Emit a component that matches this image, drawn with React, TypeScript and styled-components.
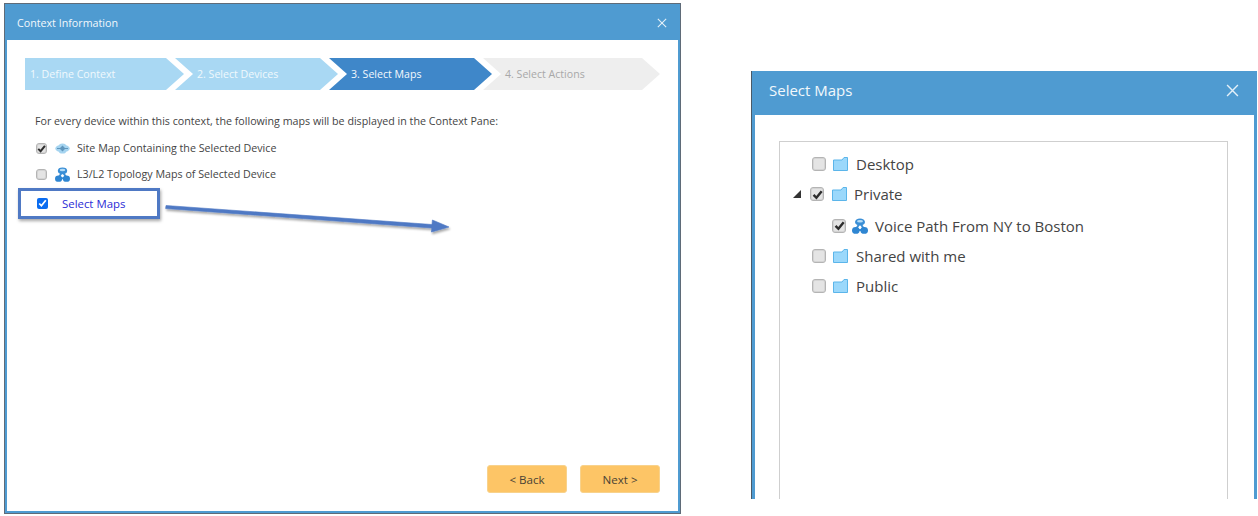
import React from 'react';
import styled, { createGlobalStyle } from 'styled-components';

const GlobalStyle = createGlobalStyle`
  html, body {
    margin: 0;
    padding: 0;
    background: #fff;
    font-family: "Open Sans", "Liberation Sans", sans-serif;
  }
`;

const Page = styled.div`
  position: relative;
  width: 1258px;
  height: 516px;
  overflow: hidden;
  display: flex;
  align-items: flex-start;
  padding: 4px 0 0 5px;
  box-sizing: border-box;
`;

const Dialog = styled.div`
  width: 675px;
  height: 509px;
  flex: none;
  box-sizing: border-box;
  background: #fff;
  border: 2px solid #4f9bd1;
  border-top-width: 1px;
  box-shadow: 0 0 0 1px #5f6b78;
  display: flex;
  flex-direction: column;
`;

const Header = styled.div`
  height: 35px;
  flex: none;
  margin: 0 -2px;
  padding: 0 13px 0 12px;
  background: #4f9bd1;
  color: #f2f8fc;
  font-size: 10.7px;
  display: flex;
  align-items: center;
  justify-content: space-between;
`;

const Steps = styled.div`
  display: flex;
  margin: 18px 0 0 18px;
`;

const Step = styled.div<{ $bg: string; $fg: string; $first?: boolean; $w: number }>`
  width: ${(p) => p.$w}px;
  height: 32px;
  flex: none;
  box-sizing: border-box;
  margin-left: ${(p) => (p.$first ? 0 : -9)}px;
  padding-left: ${(p) => (p.$first ? 5 : 22)}px;
  background: ${(p) => p.$bg};
  color: ${(p) => p.$fg};
  font-size: 10.6px;
  line-height: 32px;
  clip-path: ${(p) =>
    p.$first
      ? 'polygon(0 0, calc(100% - 18px) 0, 100% 50%, calc(100% - 18px) 100%, 0 100%)'
      : 'polygon(0 0, calc(100% - 18px) 0, 100% 50%, calc(100% - 18px) 100%, 0 100%, 18px 50%)'};
`;

const Content = styled.div`
  flex: 1;
  display: flex;
  flex-direction: column;
  padding: 23px 0 0 11px;
  color: #444;
  font-size: 10.7px;
`;

const Intro = styled.div`
  line-height: 16px;
  margin-left: 17px;
`;

const OptionRow = styled.div`
  display: flex;
  align-items: center;
  height: 26px;
  margin-left: 18px;
`;

const FirstOption = styled(OptionRow)`
  margin-top: 6px;
`;

const OptionIcon = styled.span`
  display: flex;
  margin: 0 7px 0 8px;
  width: 15px;
  justify-content: center;
`;

const Highlight = styled.div`
  width: 142px;
  height: 31px;
  box-sizing: border-box;
  margin-top: 1px;
  border: 3px solid #4f79c4;
  box-shadow: 1px 2px 3px rgba(0, 0, 0, 0.35);
  display: flex;
  align-items: center;
  padding-left: 16px;
  color: #2b2bd6;
  font-size: 11.4px;
`;

const NativeCheck = styled.input`
  width: 11px;
  height: 11px;
  margin: 0 14px 0 0;
  accent-color: #0a6cf0;
`;

const Box = styled.span<{ $size: number }>`
  width: ${(p) => p.$size}px;
  height: ${(p) => p.$size}px;
  flex: none;
  box-sizing: border-box;
  border: 1px solid #b4b4b4;
  border-radius: 3px;
  background: #e4e4e4;
  box-shadow: inset 0 0 0 1px #d4d4d4;
  display: flex;
  align-items: center;
  justify-content: center;
`;

const Footer = styled.div`
  display: flex;
  justify-content: flex-end;
  gap: 13px;
  padding: 0 18px 18px 0;
`;

const ActionButton = styled.button`
  width: 80px;
  height: 28px;
  border: 1px solid #f8d28c;
  border-radius: 3px;
  background: #fdc566;
  color: #4a4335;
  font-family: "Open Sans", "Liberation Sans", sans-serif;
  font-size: 11.6px;
  padding: 0;
`;

const SidePanel = styled.div`
  width: 505px;
  height: 428px;
  flex: none;
  margin: 67px 0 0 72px;
  box-sizing: border-box;
  background: #fff;
  border-left: 3px solid #4f9bd1;
  border-right: 3px solid #4f9bd1;
  box-shadow: -1px 0 0 #4a5a68;
  display: flex;
  flex-direction: column;
`;

const SideHeader = styled.div`
  height: 44px;
  flex: none;
  box-sizing: border-box;
  margin: 0 -3px;
  padding: 0 18px 6px 17px;
  background: #4f9bd1;
  color: #f2f8fc;
  font-size: 15px;
  display: flex;
  align-items: center;
  justify-content: space-between;
`;

const TreeBox = styled.div`
  flex: 1;
  margin: 26px 26px 0 24px;
  padding-top: 7px;
  border: 1px solid #cfcfcf;
  border-bottom: none;
  color: #444;
  font-size: 15px;
`;

const TreeRow = styled.div<{ $indent: number; $h: number }>`
  display: flex;
  align-items: center;
  height: ${(p) => p.$h}px;
  padding-left: ${(p) => p.$indent}px;
`;

const Caret = styled.span`
  width: 0;
  height: 0;
  margin-right: 9px;
  border-style: solid;
  border-width: 0 0 8px 8px;
  border-color: transparent transparent #333 transparent;
`;

const TreeIcon = styled.span<{ $left: number; $right: number }>`
  display: flex;
  margin: 0 ${(p) => p.$right}px 0 ${(p) => p.$left}px;
`;

const ArrowOverlay = styled.svg`
  position: absolute;
  left: 160px;
  top: 195px;
`;

const CheckMark = ({ size }: { size: number }) => (
  <svg width={size} height={size} viewBox="0 0 10 10">
    <path d="M1.4 5.4 L4 8 L8.8 2" fill="none" stroke="#2c2c2c" strokeWidth="2.2" />
  </svg>
);

const CloseIcon = ({ size }: { size: number }) => (
  <svg width={size} height={size} viewBox="0 0 12 12">
    <path d="M1 1 L11 11 M11 1 L1 11" stroke="#e4f0f8" strokeWidth="1.3" fill="none" />
  </svg>
);

const TopologyIcon = ({ size }: { size: number }) => (
  <svg width={size} height={size} viewBox="0 0 16 16">
    <path d="M8 5 L4 11 M8 5 L12 11 M4 12 H12" stroke="#3b8fd6" strokeWidth="2" fill="none" />
    <ellipse cx="8" cy="4" rx="5" ry="3.6" fill="#3b8fd6" />
    <ellipse cx="8" cy="3.2" rx="3" ry="1.3" fill="#b5dcf7" />
    <ellipse cx="3.8" cy="12.4" rx="3.8" ry="3.4" fill="#2f86d2" />
    <ellipse cx="12.2" cy="12.4" rx="3.8" ry="3.4" fill="#2f86d2" />
  </svg>
);

const SiteIcon = () => (
  <svg width="15" height="11" viewBox="0 0 15 11">
    <ellipse cx="7.5" cy="5.5" rx="7.2" ry="3.8" fill="#a5d4f0" />
    <ellipse cx="7.5" cy="3.6" rx="3.8" ry="3.2" fill="#a5d4f0" />
    <ellipse cx="7.5" cy="7.4" rx="3.8" ry="3.2" fill="#a5d4f0" />
    <path d="M7.5 2.6 L10.4 5.5 L7.5 8.4 L4.6 5.5 Z" fill="#5f96bd" />
    <path d="M2 5.5 H13" stroke="#5f96bd" strokeWidth="1" fill="none" />
  </svg>
);

const FolderIcon = () => (
  <svg width="15" height="14" viewBox="0 0 15 14">
    <path d="M0.5 3 H9 L11 0.5 H14.5 V13.5 H0.5 Z" fill="#9bd8fb" stroke="#5bb5ea" strokeWidth="1" />
  </svg>
);

const ANNOTATION_ARROW = 'M6 10.5 L272 29.5 L272.4 25 L289 32 L271.4 37 L271.8 33 L5.6 13.5 Z';

const App: React.FC = () => {
  return (
    <Page>
      <GlobalStyle />
      <Dialog>
        <Header>
          <span>Context Information</span>
          <CloseIcon size={10} />
        </Header>
        <Steps>
          <Step $first $w={159} $bg="#a9d8f3" $fg="#f0f8fd">1. Define Context</Step>
          <Step $w={163} $bg="#a9d8f3" $fg="#f0f8fd">2. Select Devices</Step>
          <Step $w={163} $bg="#3f87c9" $fg="#f4f9fd">3. Select Maps</Step>
          <Step $w={177} $bg="#eeeeee" $fg="#a8a8a8">4. Select Actions</Step>
        </Steps>
        <Content>
          <Intro>For every device within this context, the following maps will be displayed in the Context Pane:</Intro>
          <FirstOption>
            <Box $size={11}><CheckMark size={9} /></Box>
            <OptionIcon><SiteIcon /></OptionIcon>
            <span>Site Map Containing the Selected Device</span>
          </FirstOption>
          <OptionRow>
            <Box $size={11} />
            <OptionIcon><TopologyIcon size={15} /></OptionIcon>
            <span>L3/L2 Topology Maps of Selected Device</span>
          </OptionRow>
          <Highlight>
            <NativeCheck type="checkbox" defaultChecked />
            <span>Select Maps</span>
          </Highlight>
        </Content>
        <Footer>
          <ActionButton>&lt; Back</ActionButton>
          <ActionButton>Next &gt;</ActionButton>
        </Footer>
      </Dialog>
      <SidePanel>
        <SideHeader>
          <span>Select Maps</span>
          <CloseIcon size={13} />
        </SideHeader>
        <TreeBox>
          <TreeRow $indent={32} $h={30}>
            <Box $size={14} />
            <TreeIcon $left={7} $right={8}><FolderIcon /></TreeIcon>
            <span>Desktop</span>
          </TreeRow>
          <TreeRow $indent={13} $h={30}>
            <Caret />
            <Box $size={14}><CheckMark size={11} /></Box>
            <TreeIcon $left={8} $right={7}><FolderIcon /></TreeIcon>
            <span>Private</span>
          </TreeRow>
          <TreeRow $indent={52} $h={33}>
            <Box $size={14}><CheckMark size={11} /></Box>
            <TreeIcon $left={6} $right={7}><TopologyIcon size={16} /></TreeIcon>
            <span>Voice Path From NY to Boston</span>
          </TreeRow>
          <TreeRow $indent={32} $h={28}>
            <Box $size={14} />
            <TreeIcon $left={7} $right={8}><FolderIcon /></TreeIcon>
            <span>Shared with me</span>
          </TreeRow>
          <TreeRow $indent={32} $h={31}>
            <Box $size={14} />
            <TreeIcon $left={7} $right={8}><FolderIcon /></TreeIcon>
            <span>Public</span>
          </TreeRow>
        </TreeBox>
      </SidePanel>
      <ArrowOverlay width="300" height="45" viewBox="0 0 300 45">
        <defs>
          <filter id="arrowShadow" x="-5%" y="-50%" width="110%" height="200%">
            <feDropShadow dx="1" dy="2" stdDeviation="1.2" floodColor="#000" floodOpacity="0.35" />
          </filter>
        </defs>
        <path d={ANNOTATION_ARROW} fill="#4f79c4" stroke="#4f79c4" strokeWidth="0.6" filter="url(#arrowShadow)" />
      </ArrowOverlay>
    </Page>
  );
};

export default App;
